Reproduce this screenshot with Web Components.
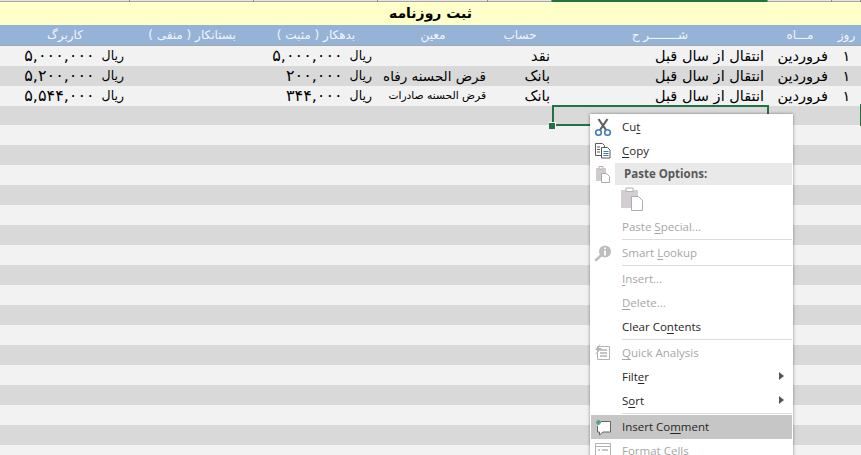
<!DOCTYPE html>
<html lang="fa">
<head>
<meta charset="utf-8">
<title>ثبت روزنامه</title>
<style>
  html, body { margin: 0; padding: 0; height: 100%; overflow: hidden; background: #d9d9d9; }
</style>
</head>
<body>
<x-sheet>
  <x-title>ثبت روزنامه</x-title>
  <x-row head>
    <x-cell center>روز</x-cell><x-cell center>مـــاه</x-cell><x-cell center>شــــــــر ح</x-cell><x-cell center>حساب</x-cell><x-cell center>معین</x-cell><x-cell center>بدهکار ( مثبت )</x-cell><x-cell center>بستانکار ( منفی )</x-cell><x-cell center>کاربرگ</x-cell>
  </x-row>
  <x-row>
    <x-cell center>۱</x-cell><x-cell inset>فروردین</x-cell><x-cell inset>انتقال از سال قبل</x-cell><x-cell>نقد</x-cell><x-cell></x-cell><x-cell money>۵,۰۰۰,۰۰۰</x-cell><x-cell></x-cell><x-cell money>۵,۰۰۰,۰۰۰</x-cell>
  </x-row>
  <x-row>
    <x-cell center>۱</x-cell><x-cell inset>فروردین</x-cell><x-cell inset>انتقال از سال قبل</x-cell><x-cell>بانک</x-cell><x-cell mid>قرض الحسنه رفاه</x-cell><x-cell money>۲۰۰,۰۰۰</x-cell><x-cell></x-cell><x-cell money>۵,۲۰۰,۰۰۰</x-cell>
  </x-row>
  <x-row>
    <x-cell center>۱</x-cell><x-cell inset>فروردین</x-cell><x-cell inset>انتقال از سال قبل</x-cell><x-cell>بانک</x-cell><x-cell small>قرض الحسنه صادرات</x-cell><x-cell money>۳۴۴,۰۰۰</x-cell><x-cell></x-cell><x-cell money>۵,۵۴۴,۰۰۰</x-cell>
  </x-row>
  <x-selection></x-selection>
  <x-menu>
    <x-item key="t" icon="cut">Cut</x-item>
    <x-item key="C" icon="copy">Copy</x-item>
    <x-item header icon="paste">Paste Options:</x-item>
    <x-item tall icon="bigpaste"></x-item>
    <x-item off key="S">Paste Special...</x-item>
    <x-sep></x-sep>
    <x-item off key="L" icon="lookup">Smart Lookup</x-item>
    <x-sep></x-sep>
    <x-item off key="I">Insert...</x-item>
    <x-item off key="D">Delete...</x-item>
    <x-item key="n">Clear Contents</x-item>
    <x-sep></x-sep>
    <x-item off key="Q" icon="quick">Quick Analysis</x-item>
    <x-item key="e" more>Filter</x-item>
    <x-item key="o" more>Sort</x-item>
    <x-sep></x-sep>
    <x-item hot key="m" icon="comment">Insert Comment</x-item>
    <x-item off key="F" icon="format">Format Cells</x-item>
  </x-menu>
</x-sheet>
<script>
const ICONS = {
  cut: `<svg width="20" height="20" viewBox="0 0 20 20" fill="none"><path d="M5.500 2l7.500 11M14.500 2L7 13" stroke="#5f5f5f" stroke-width="2.200"/><circle cx="5.500" cy="15.500" r="2.800" stroke="#3f7cbf" stroke-width="1.600"/><circle cx="14.500" cy="15.500" r="2.800" stroke="#3f7cbf" stroke-width="1.600"/></svg>`,
  copy: `<svg width="20" height="20" viewBox="0 0 20 20" fill="#fff" stroke="#5a5a5a"><path d="M2.500 2.500h7l2 2v10h-9z"/><path d="M8.500 6.500h6l2.500 2.500v8h-8.500z"/><path d="M4 6h3M4 8.500h3M4 11h3" stroke="#5a5a5a"/><path d="M10.500 10.500h5M10.500 12.500h5M10.500 14.500h5" stroke="#3f7cbf"/></svg>`,
  paste: `<svg width="20" height="20" viewBox="0 0 20 20"><path d="M3 4h10v13H3z" fill="#cfcbcf"/><path d="M6 2.500h4v2.500H6z" fill="#fff" stroke="#b5b1b5"/><path d="M8.500 9.500h5l3 3v6h-8z" fill="#fff" stroke="#a9a9a9"/></svg>`,
  bigpaste: `<svg width="22" height="26" viewBox="0 0 22 26"><path d="M0 3h17v18H0z" fill="#d2ced2"/><path d="M5 1h7v3.500H5z" fill="#fff" stroke="#b5b1b5"/><path d="M10.500 9.500h7l4 4v10h-11z" fill="#fff" stroke="#adadad"/></svg>`,
  lookup: `<svg width="20" height="20" viewBox="0 0 20 20" fill="none"><circle cx="12" cy="8.500" r="6" fill="#bdbdbd"/><path d="M7.500 13l-4.500 4" stroke="#bdbdbd" stroke-width="2.500" stroke-linecap="round"/><path d="M12 4.500v1.500M12 7.500v5" stroke="#fff" stroke-width="1.800"/></svg>`,
  quick: `<svg width="20" height="20" viewBox="0 0 20 20" fill="none"><path d="M4.500 3.500h12v13h-12z" fill="#fff" stroke="#b3b3b3"/><path d="M7 7h7M7 10h7M7 13h7" stroke="#b3b3b3" stroke-width="1.400"/><path d="M7 1L2 7h3l-3 5 7-7H6z" fill="#b3b3b3"/></svg>`,
  comment: `<svg width="20" height="20" viewBox="0 0 20 20" fill="none"><path d="M8 4.500h9.500v10.500H10l-3.500 3v-3H4.500V9" fill="#fff" stroke="#666"/><path d="M5.500 3v5M3 5.500h5" stroke="#4f9a83" stroke-width="2"/></svg>`,
  format: `<svg width="20" height="20" viewBox="0 0 20 20" fill="none"><path d="M2.500 2.500h15v13h-15z" fill="#fff" stroke="#b3b3b3"/><path d="M2.500 5.500h15" stroke="#b3b3b3"/><path d="M5 9h2M9 9h6" stroke="#b3b3b3" stroke-width="1.400"/></svg>`
};

// makes an element class from a style + markup pair
function define(name, css, html, init) {
  customElements.define(name, class extends HTMLElement {
    constructor() {
      super();
      this.attachShadow({ mode: 'open' });
    }
    connectedCallback() {
      this.shadowRoot.innerHTML = `<style>${css}</style>${html}`;
      if (init) init(this);
    }
  });
}

define('x-sheet', `
  :host { display: block; position: relative; height: 455px; overflow: hidden;
    --cols: 29px 64px 216px 64px 110px 124px 124px 130px;
    background: repeating-linear-gradient(#d9d9d9 0 20px, #f2f2f2 20px 40px) 0 105px;
    font-family: "DejaVu Sans", "Liberation Sans", sans-serif; }
  .ticks { height: 2px; background: linear-gradient(#e6e6e6 50%, #a6a6a6 50%);
    display: grid; grid-template-columns: 130px 124px 124px 110px 64px 216px 64px 29px; }
  .ticks i { border-right: 1px solid #8c8c8c; }
  .ticks i.on { background: #217346; }
  .edge { position: absolute; right: 0; top: 104px; width: 1px; height: 22px; background: #217346; }
`, `<div class="ticks"><i></i><i></i><i></i><i></i><i></i><i class="on"></i><i></i><i></i></div><slot></slot><div class="edge"></div>`);

define('x-title', `
  :host { display: block; height: 23px; background: #ffffc9; color: #000; direction: rtl;
    text-align: center; font: bold 14px/23px "DejaVu Sans", sans-serif; }
`, `<slot></slot>`);

define('x-row', `
  :host { display: grid; grid-template-columns: var(--cols); direction: rtl; height: 20px;
    color: #000; font-size: 14.500px; line-height: 20px; }
  :host(:nth-of-type(even)) { background: #f2f2f2; }
  :host(:nth-of-type(odd)) { background: #d9d9d9; }
  :host([head]) { background: #95b3d7; color: #f2f5fa; font-size: 12px; height: 21px; border-bottom: 1px solid #a6a6a6; box-sizing: border-box; }
`, `<slot></slot>`);

define('x-cell', `
  :host { display: flex; padding: 0 2px; white-space: nowrap; overflow: hidden; }
  :host([center]) { justify-content: center; }
  :host([inset]) { padding-right: 4px; }
  :host([mid]) { font-size: 13.500px; }
  :host([small]) { font-size: 10.700px; }
  :host([money]) { direction: ltr; justify-content: flex-end; gap: 7px; padding-right: 6px; }
  :host([money]) .num { font-size: 16px; }
  .rial { direction: rtl; font-size: 12.500px; }
`, `<span class="num"><slot></slot></span><span class="rial" id="r" hidden>ریال</span>`, el => {
  if (el.hasAttribute('money')) el.shadowRoot.getElementById('r').hidden = false;
});

define('x-selection', `
  :host { display: block; position: absolute; left: 552px; top: 105px; width: 217px; height: 21px;
    box-sizing: border-box; border: 2px solid #217346; }
  i { position: absolute; left: -5px; bottom: -5px; width: 6px; height: 6px; background: #217346; border: 1px solid #fff; border-width: 1px 1px 0 0; }
`, `<i></i>`);

define('x-menu', `
  :host { display: block; position: absolute; left: 590px; top: 114px; width: 203px; height: 360px;
    background: #fff; box-shadow: 0 0 3px rgba(0,0,0,.45); box-sizing: border-box; padding: 1px;
    font: 11.500px "Open Sans", "Liberation Sans", sans-serif; color: #262626; }
`, `<slot></slot>`);

define('x-item', `
  :host { display: flex; align-items: center; box-sizing: border-box; height: 24px; position: relative; padding: 0 0 2px 31px; }
  :host([off]) { color: #a6a6a6; }
  :host([hot]) { background: #c6c6c6; }
  :host([header]) { height: 22px; margin-left: 24px; padding-left: 9px; background: #e9e9e9; color: #595959; font-weight: 700; }
  :host([tall]) { height: 30px; }
  .icon { position: absolute; left: 2px; top: 2px; width: 20px; height: 20px; }
  :host([header]) .icon { left: -22px; top: 1px; }
  :host([tall]) .icon { left: 30px; top: 2px; width: 22px; height: 26px; }
  .more { position: absolute; right: 8px; top: 7px; border-left: 5px solid #555; border-top: 4px solid transparent; border-bottom: 4px solid transparent; }
  u { text-underline-offset: 2px; }
`, ``, el => {
  const text = el.textContent;
  const key = el.getAttribute('key');
  const at = key ? text.indexOf(key) : -1;
  const label = at < 0 ? text : `${text.slice(0, at)}<u>${key}</u>${text.slice(at + 1)}`;
  const icon = ICONS[el.getAttribute('icon')];
  const box = document.createElement('div');
  box.innerHTML = `${icon ? `<span class="icon">${icon}</span>` : ''}<span>${label}</span>${el.hasAttribute('more') ? '<i class="more"></i>' : ''}`;
  el.shadowRoot.append(...box.childNodes);
});

define('x-sep', `
  :host { display: block; height: 1px; padding-bottom: 1px; margin: 0 0 0 31px; background: #dcdcdc content-box; }
`, ``);
</script>
</body>
</html>
